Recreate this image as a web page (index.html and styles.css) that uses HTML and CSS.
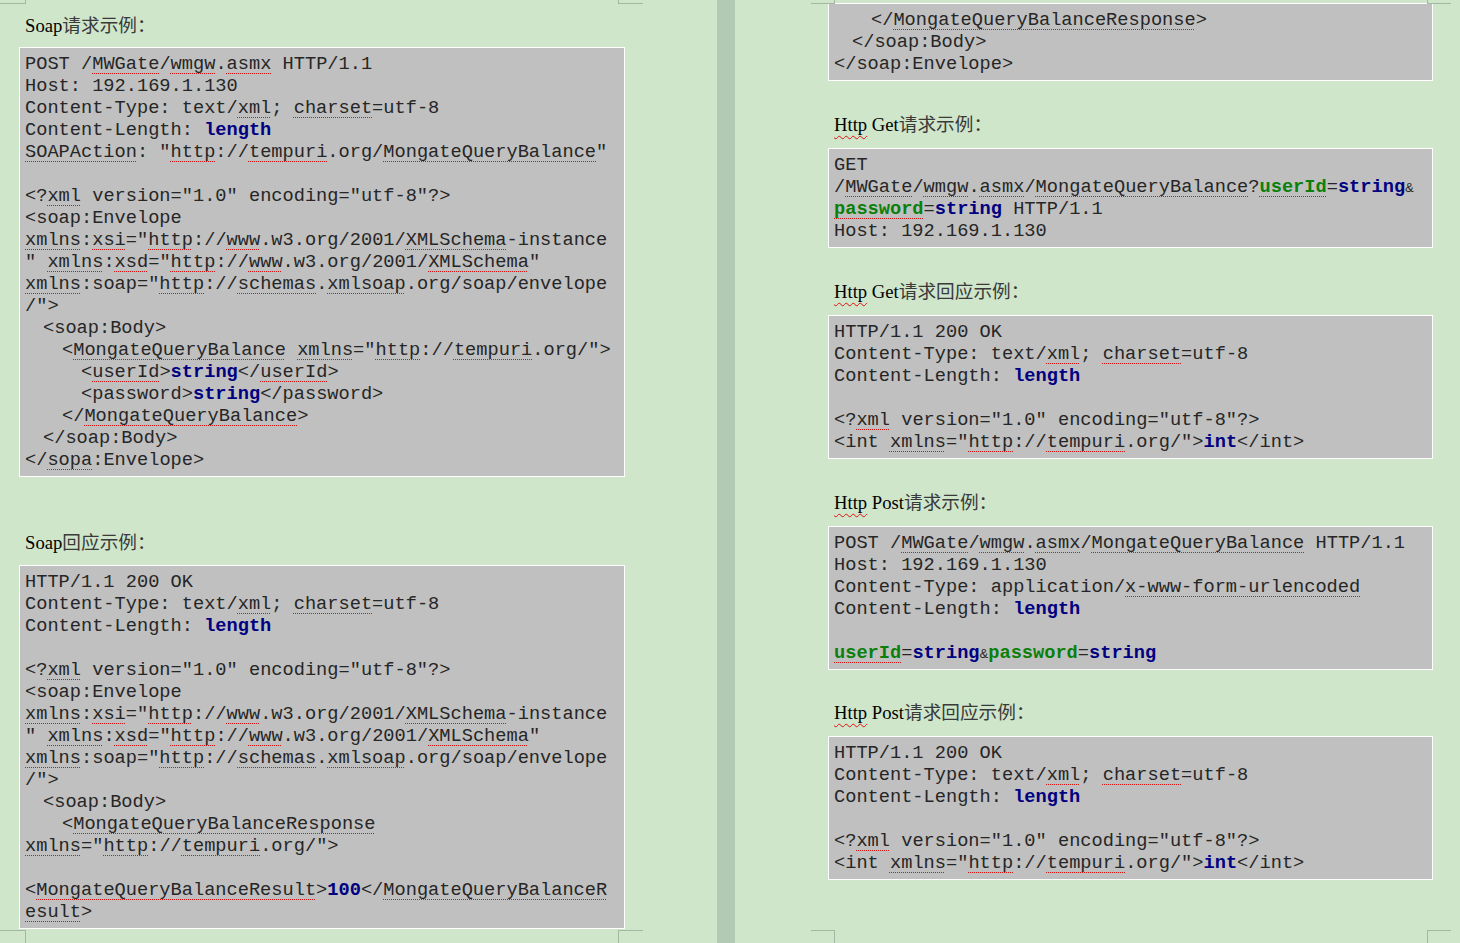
FILE: index.html
```html
<!DOCTYPE html>
<html lang="zh-CN">
<head>
<meta charset="utf-8">
<title>WebService 示例</title>
<link rel="stylesheet" href="styles.css">
</head>
<body>
<div class="page page-left">
  <div class="mark tl"></div><div class="mark tr"></div><div class="mark bl"></div><div class="mark br"></div>
  <p class="h">Soap<span class="zh">请求示例：</span></p>
  <pre class="code">POST /<span class="sp">MWGate</span>/<span class="sp">wmgw</span>.<span class="sp">asmx</span> HTTP/1.1
Host: 192.169.1.130
Content-Type: text/<span class="sp">xml</span>; <span class="sp">charset</span>=utf-8
Content-Length: <b class="nv">length</b>
<span class="sp">SOAPAction</span>: "<span class="sp">http</span>://<span class="sp">tempuri</span>.org/<span class="sp">MongateQueryBalance</span>"

&lt;?<span class="sp">xml</span> version="1.0" encoding="utf-8"?&gt;
&lt;soap:Envelope
<span class="sp">xmlns</span>:<span class="sp">xsi</span>="<span class="sp">http</span>://<span class="sp">www</span>.w3.org/2001/<span class="sp">XMLSchema</span>-instance
" <span class="sp">xmlns</span>:<span class="sp">xsd</span>="<span class="sp">http</span>://<span class="sp">www</span>.w3.org/2001/<span class="sp">XMLSchema</span>"
<span class="sp">xmlns</span>:soap="<span class="sp">http</span>://<span class="sp">schemas</span>.<span class="sp">xmlsoap</span>.org/soap/envelope
/"&gt;
<span class="i2"></span>&lt;soap:Body&gt;
<span class="i4"></span>&lt;<span class="sp">MongateQueryBalance</span> <span class="sp">xmlns</span>="<span class="sp">http</span>://<span class="sp">tempuri</span>.org/"&gt;
<span class="i6"></span>&lt;<span class="sp">userId</span>&gt;<b class="nv">string</b>&lt;/<span class="sp">userId</span>&gt;
<span class="i6"></span>&lt;password&gt;<b class="nv">string</b>&lt;/password&gt;
<span class="i4"></span>&lt;/<span class="sp">MongateQueryBalance</span>&gt;
<span class="i2"></span>&lt;/soap:Body&gt;
&lt;/<span class="sp">sopa</span>:Envelope&gt;</pre>
  <p class="h h-far">Soap<span class="zh">回应示例：</span></p>
  <pre class="code">HTTP/1.1 200 OK
Content-Type: text/<span class="sp">xml</span>; <span class="sp">charset</span>=utf-8
Content-Length: <b class="nv">length</b>

&lt;?<span class="sp">xml</span> version="1.0" encoding="utf-8"?&gt;
&lt;soap:Envelope
<span class="sp">xmlns</span>:<span class="sp">xsi</span>="<span class="sp">http</span>://<span class="sp">www</span>.w3.org/2001/<span class="sp">XMLSchema</span>-instance
" <span class="sp">xmlns</span>:<span class="sp">xsd</span>="<span class="sp">http</span>://<span class="sp">www</span>.w3.org/2001/<span class="sp">XMLSchema</span>"
<span class="sp">xmlns</span>:soap="<span class="sp">http</span>://<span class="sp">schemas</span>.<span class="sp">xmlsoap</span>.org/soap/envelope
/"&gt;
<span class="i2"></span>&lt;soap:Body&gt;
<span class="i4"></span>&lt;<span class="sp">MongateQueryBalanceResponse</span>
<span class="sp">xmlns</span>="<span class="sp">http</span>://<span class="sp">tempuri</span>.org/"&gt;

&lt;<span class="sp">MongateQueryBalanceResult</span>&gt;<b class="nv">100</b>&lt;/<span class="sp">MongateQueryBalanceR</span>
<span class="sp">esult</span>&gt;</pre>
</div>
<div class="strip"></div>
<div class="page page-right">
  <div class="mark tl"></div><div class="mark tr"></div><div class="mark bl"></div><div class="mark br"></div>
  <pre class="code"><span class="i4"></span>&lt;/<span class="sp">MongateQueryBalanceResponse</span>&gt;
<span class="i2"></span>&lt;/soap:Body&gt;
&lt;/soap:Envelope&gt;</pre>
  <p class="h"><span class="spw">Http</span> Get<span class="zh">请求示例：</span></p>
  <pre class="code">GET
/<span class="sp">MWGate</span>/<span class="sp">wmgw</span>.<span class="sp">asmx</span>/<span class="sp">MongateQueryBalance</span>?<b class="gr sp">userId</b>=<b class="nv">string</b><span class="amp">&amp;</span>
<b class="gr sp">password</b>=<b class="nv">string</b> HTTP/1.1
Host: 192.169.1.130</pre>
  <p class="h"><span class="spw">Http</span> Get<span class="zh">请求回应示例：</span></p>
  <pre class="code">HTTP/1.1 200 OK
Content-Type: text/<span class="sp">xml</span>; <span class="sp">charset</span>=utf-8
Content-Length: <b class="nv">length</b>

&lt;?<span class="sp">xml</span> version="1.0" encoding="utf-8"?&gt;
&lt;int <span class="sp">xmlns</span>="<span class="sp">http</span>://<span class="sp">tempuri</span>.org/"&gt;<b class="nv">int</b>&lt;/int&gt;</pre>
  <p class="h"><span class="spw">Http</span> Post<span class="zh">请求示例：</span></p>
  <pre class="code">POST /<span class="sp">MWGate</span>/<span class="sp">wmgw</span>.<span class="sp">asmx</span>/<span class="sp">MongateQueryBalance</span> HTTP/1.1
Host: 192.169.1.130
Content-Type: application/<span class="sp">x-www-form-urlencoded</span>
Content-Length: <b class="nv">length</b>

<b class="gr sp">userId</b>=<b class="nv">string</b><span class="amp">&amp;</span><b class="gr">password</b>=<b class="nv">string</b></pre>
  <p class="h h-last"><span class="spw">Http</span> Post<span class="zh">请求回应示例：</span></p>
  <pre class="code">HTTP/1.1 200 OK
Content-Type: text/<span class="sp">xml</span>; <span class="sp">charset</span>=utf-8
Content-Length: <b class="nv">length</b>

&lt;?<span class="sp">xml</span> version="1.0" encoding="utf-8"?&gt;
&lt;int <span class="sp">xmlns</span>="<span class="sp">http</span>://<span class="sp">tempuri</span>.org/"&gt;<b class="nv">int</b>&lt;/int&gt;</pre>
</div>
</body>
</html>
```
FILE: styles.css
```css
html, body {
  margin: 0;
  padding: 0;
}
body {
  width: 1460px;
  height: 943px;
  overflow: hidden;
  background: #cfe6cb;
  display: flex;
  color: #111;
}
.page {
  position: relative;
  box-sizing: border-box;
  height: 943px;
}
.page-left {
  width: 717px;
  padding: 14px 0 0 19px;
}
.page-right {
  flex: 1;
  padding: 3px 0 0 93px;
}
.strip {
  width: 18px;
  height: 943px;
  background: #b2cab3;
}
.mark {
  position: absolute;
  box-sizing: border-box;
  border: 0 solid #a3b8a3;
}
.mark.tl { top: 0; height: 4px; border-right-width: 1px; border-bottom-width: 1px; }
.mark.tr { top: 0; height: 4px; border-left-width: 1px; border-bottom-width: 1px; }
.mark.bl { top: 930px; height: 13px; border-right-width: 1px; border-top-width: 1px; }
.mark.br { top: 930px; height: 13px; border-left-width: 1px; border-top-width: 1px; }
.page-left .mark.tl, .page-left .mark.bl { left: 0; width: 26px; }
.page-left .mark.tr, .page-left .mark.br { left: 618px; width: 25px; }
.page-right .mark.tl, .page-right .mark.bl { left: 76px; width: 24px; }
.page-right .mark.tr, .page-right .mark.br { left: 692px; width: 24px; }

.h {
  margin: 32px 0 11px;
  padding-left: 6px;
  height: 24px;
  line-height: 24px;
  font-family: "Liberation Serif", "Noto Sans CJK SC", serif;
  font-size: 18.67px;
  color: #000;
  white-space: nowrap;
}
.h .zh {
  color: #3a3a3a;
}
.page-left .mark + .h {
  margin-top: 0;
  margin-bottom: 9px;
}
.page-left .h.h-far {
  margin-top: 54px;
  margin-bottom: 10px;
}
.page-right .h.h-last {
  margin-top: 31px;
}
.code {
  margin: 0;
  box-sizing: border-box;
  width: 606px;
  background: #c0c0c0;
  border: 1px solid #fff;
  padding: 5px 5px 5px;
  font-family: "Liberation Mono", "Courier New", monospace;
  font-size: 18.67px;
  line-height: 22px;
  color: #262626;
  white-space: pre;
  overflow: hidden;
}
.page-right .code {
  width: 605px;
}
.i2, .i4, .i6 {
  display: inline-block;
}
.i2 { width: 18px; }
.i4 { width: 37px; }
.i6 { width: 56px; }
.nv {
  color: #000080;
  font-weight: bold;
}
.gr {
  color: #0a800a;
  font-weight: bold;
}
.amp {
  font-family: "Liberation Sans", sans-serif;
  font-size: 13px;
  line-height: 1;
}
.sp {
  text-decoration: underline dotted #e01010;
  text-decoration-thickness: 1px;
  text-underline-offset: 4px;
  text-decoration-skip-ink: none;
}
.spw {
  text-decoration: underline wavy #e01010;
  text-decoration-thickness: 1px;
  text-underline-offset: 4px;
  text-decoration-skip-ink: none;
}
```
